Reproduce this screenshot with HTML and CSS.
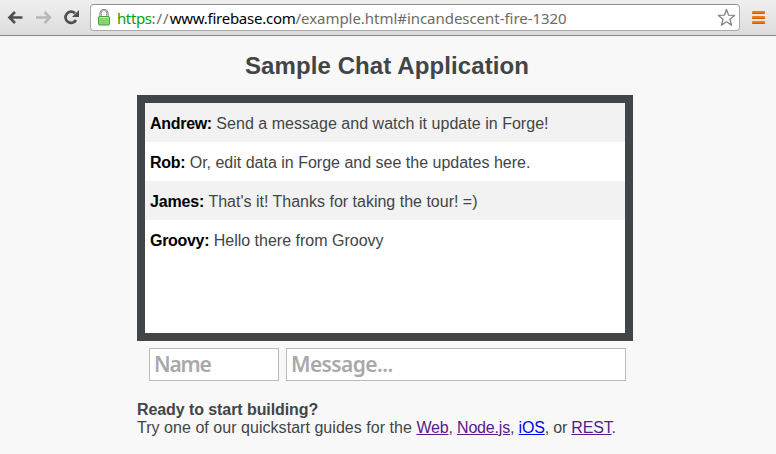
FILE: index.html
```html
<!DOCTYPE html>
<html lang="en">
<head>
<meta charset="utf-8">
<title>Sample Chat Application</title>
<link rel="stylesheet" href="styles.css">
</head>
<body>
<header class="toolbar">
  <svg class="nav-icon" width="90" height="35" viewBox="0 0 90 35" fill="none">
    <path d="M22.500 17.500H10M15 12l-5.500 5.500 5.500 5.500" stroke="#505050" stroke-width="2.700"/>
    <path d="M36 17.500h13M44.500 12l5.500 5.500-5.500 5.500" stroke="#b8b8b8" stroke-width="2.500"/>
    <path d="M75 13.300A5.600 5.600 0 1 0 76 20" stroke="#505050" stroke-width="2.700"/>
    <path d="M79 10v7h-7z" fill="#505050"/>
  </svg>
  <div class="omnibox">
    <svg class="lock" width="12" height="17" viewBox="0 0 12 17" fill="none">
      <path d="M2.500 8V4.500a3.500 3.500 0 0 1 7 0V8" stroke="#777" stroke-width="2.200"/>
      <path d="M2.500 8V4.500a3.500 3.500 0 0 1 7 0V8" stroke="#ddd" stroke-width=".8"/>
      <rect x=".5" y="7.500" width="11" height="8.500" rx=".8" fill="#83d673" stroke="#42a536"/>
      <path d="M1.500 8.500h9" stroke="#c4efb9"/>
    </svg>
    <div class="url"><span class="scheme">https</span><span class="sep">://</span><span class="host">www.firebase.com</span><span class="path">/example.html#incandescent-fire-1320</span></div>
    <svg class="star" width="19" height="19" viewBox="0 0 19 19" fill="#fff" stroke="#858585" stroke-width="1.300" stroke-linejoin="round">
      <path d="M9.500 1.500l2.100 5.700 6 .2-4.700 3.800 1.700 5.900-5.100-3.400-5.100 3.400 1.700-5.900L1.400 7.400l6-.2z"/>
    </svg>
  </div>
  <div class="menu"><i></i><i></i><i></i></div>
</header>
<main class="page">
  <h1>Sample Chat Application</h1>
  <div class="messages">
    <div class="row"><b>Andrew:</b> <span>Send a message and watch it update in Forge!</span></div>
    <div class="row"><b>Rob:</b> <span>Or, edit data in Forge and see the updates here.</span></div>
    <div class="row"><b>James:</b> <span>That's it! Thanks for taking the tour! =)</span></div>
    <div class="row"><b>Groovy:</b> <span>Hello there from Groovy</span></div>
  </div>
  <form class="entry">
    <input class="name" type="text" placeholder="Name">
    <input class="message" type="text" placeholder="Message...">
  </form>
  <footer>
    <b>Ready to start building?</b>
    <p>Try one of our quickstart guides for the <span class="links"><a>Web</a>, <a>Node.js</a>, <a class="new">iOS</a>, or <a>REST</a>.</span></p>
  </footer>
</main>
</body>
</html>
```
FILE: styles.css
```css
* { box-sizing: border-box; }
body {
  margin: 0;
  height: 454px;
  overflow: hidden;
  background: #f8f8f8;
  color: #424547;
  font: 16px/18px "Liberation Sans", Arial, sans-serif;
}
.toolbar {
  display: flex;
  height: 36px;
  background: linear-gradient(#f0f0f0, #dcdcdc);
  border-bottom: 1px solid #858585;
}
.nav-icon { flex: none; }
.omnibox {
  display: flex;
  align-items: center;
  width: 650px;
  height: 27px;
  margin-top: 4px;
  padding: 0 3px 0 7px;
  background: #fff;
  border: 1px solid #aaa;
  border-top-color: #929292;
  border-radius: 4px;
}
.lock { flex: none; margin-right: 7px; }
.url {
  flex: 1;
  font: 15px/20px "Noto Sans", "Open Sans", sans-serif;
  letter-spacing: -0.04px;
  white-space: nowrap;
  color: #6c6c66;
}
.scheme { color: #08a000; letter-spacing: -0.4px; }
.sep { letter-spacing: 1px; }
.host { color: #000; letter-spacing: -0.25px; }
.star { flex: none; }
.menu {
  display: flex;
  flex-direction: column;
  gap: 2px;
  width: 13px;
  margin: 11px 0 0 12px;
}
.menu i { height: 3px; background: #ef7b0e; border-bottom: 1px solid #c65d12; border-radius: 1px; }
.page { width: 496px; margin-left: 137px; }
h1 {
  margin: 0;
  padding: 15px 0 14px 4px;
  font-size: 24px;
  line-height: 30px;
  letter-spacing: 0.1px;
  text-align: center;
  white-space: nowrap;
}
.messages { height: 246px; border: 8px solid #424547; background: #fff; }
.row { height: 39px; padding: 12px 5px 0; white-space: nowrap; }
.row:nth-child(odd) { background: #f2f2f2; }
.row b { color: #000; letter-spacing: -0.3px; }
.row:nth-child(3) b { letter-spacing: -0.15px; }
.row:nth-child(1) span { letter-spacing: 0.03px; }
.entry { display: flex; gap: 7px; margin: 7px 0 20px 12px; }
input {
  height: 33px;
  padding: 0 4px 2px;
  background: #fff;
  border: 1px solid #bbb;
  border-radius: 0;
  font: 600 21px/28px "Noto Sans", "Open Sans", sans-serif;
}
input::placeholder { color: #a9a9a9; opacity: 1; }
.name { width: 130px; letter-spacing: -1.2px; }
.message { width: 340px; letter-spacing: -0.6px; }
footer { white-space: nowrap; }
footer b { letter-spacing: -0.08px; }
footer p { margin: 0; letter-spacing: 0.04px; }
.links { letter-spacing: -0.18px; }
a { color: #551a8b; text-decoration: underline; }
a.new { color: #0000ee; }
```
